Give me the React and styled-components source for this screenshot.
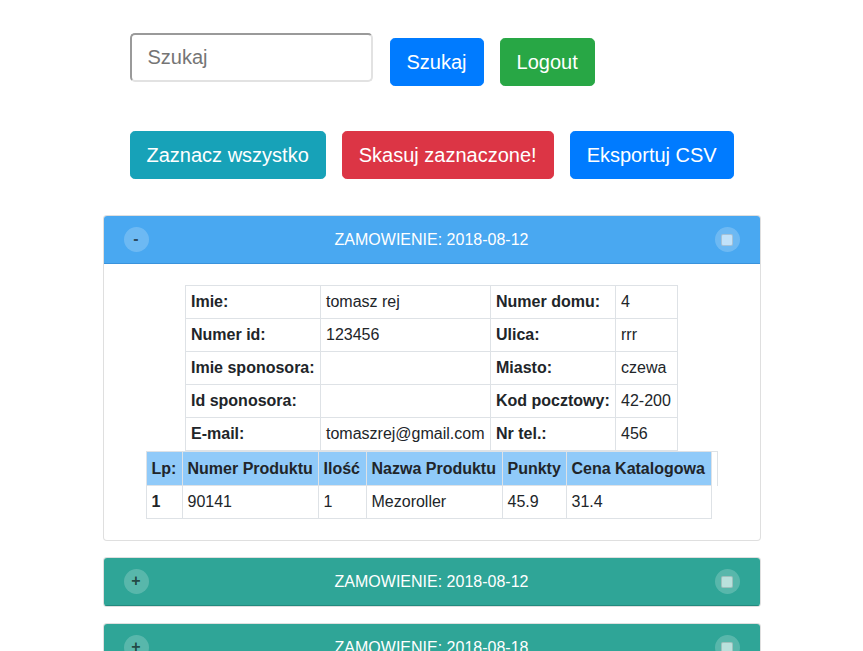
import React from "react";
import styled, { createGlobalStyle } from "styled-components";

const Global = createGlobalStyle`
  html, body { margin: 0; padding: 0; background: #fff; }
  body {
    font-family: "Liberation Sans", Arial, Helvetica, sans-serif;
    color: #212529;
    font-size: 16px;
  }
  * { box-sizing: border-box; }
`;

const Page = styled.div`
  width: 658px;
  margin: 0 auto;
  padding-top: 33px;
`;

const SearchRow = styled.div`
  display: flex;
  align-items: flex-start;
  padding-left: 27px;
`;

const SearchInput = styled.input`
  width: 243px;
  height: 49px;
  margin-right: 17px;
  padding: 0 16px;
  font-family: inherit;
  font-size: 20px;
  color: #495057;
  border-radius: 5px;
  border-style: solid;
  border-width: 2px;
  border-color: #9a9a9a #e2e2e2 #e2e2e2 #9a9a9a;
  outline: none;
  &::placeholder { color: #757575; }
`;

const ButtonGroup = styled.div`
  display: flex;
  gap: 16px;
  margin-top: ${(p) => p.$top || 0}px;
`;

const ActionRow = styled.div`
  display: flex;
  gap: 16px;
  padding-left: 27px;
  margin-top: 45px;
`;

const Button = styled.button`
  font-family: inherit;
  font-size: 20px;
  line-height: 30px;
  padding: 8px 16px;
  color: #fff;
  background: ${(p) => p.$bg};
  border: 1px solid ${(p) => p.$bg};
  border-radius: 4.8px;
  cursor: pointer;
  white-space: nowrap;
`;

const CardList = styled.div`
  display: flex;
  flex-direction: column;
  gap: 16px;
  margin-top: 36px;
`;

const Card = styled.div`
  border: 1px solid rgba(0, 0, 0, 0.125);
  border-radius: 4px;
  overflow: hidden;
  background: #fff;
`;

const CardHeader = styled.div`
  height: 48px;
  display: flex;
  align-items: center;
  justify-content: space-between;
  padding: 0 20px;
  background: ${(p) => p.$bg};
  border-bottom: 1px solid ${(p) => p.$line};
  color: #fff;
`;

const HeaderTitle = styled.div`
  font-size: 16px;
  line-height: 24px;
  flex: 1;
  text-align: center;
`;

const Circle = styled.div`
  width: 25px;
  height: 25px;
  border-radius: 50%;
  background: rgba(255, 255, 255, 0.2);
  display: flex;
  align-items: center;
  justify-content: center;
  flex-shrink: 0;
`;

const ToggleGlyph = styled.span`
  font-size: 16px;
  font-weight: bold;
  line-height: 1;
  color: rgba(0, 0, 0, 0.62);
  margin-top: -1px;
`;

const CheckSquare = styled.span`
  width: 12px;
  height: 12px;
  border-radius: 2px;
  background: rgba(255, 255, 255, 0.58);
  border: 1px solid rgba(0, 0, 0, 0.14);
`;

const CardBody = styled.div`
  padding: 21px 20px;
`;

const InfoTable = styled.table`
  border-collapse: collapse;
  margin: 0 auto;
  table-layout: fixed;
  width: 492px;
`;

const InfoCell = styled.td`
  border: 1px solid #dee2e6;
  padding: 4px 5px;
  line-height: 24px;
  font-size: 16px;
  font-weight: ${(p) => (p.$label ? "bold" : "normal")};
  white-space: nowrap;
  text-align: left;
`;

const ProductTable = styled.table`
  border-collapse: collapse;
  margin: 0 auto;
  table-layout: fixed;
  width: 571px;
`;

const HeadCell = styled.th`
  background: #90caf9;
  border: 1px solid #dee2e6;
  padding: 5px 5px 4px;
  line-height: 24px;
  font-size: 16px;
  font-weight: bold;
  text-align: left;
  white-space: nowrap;
`;

const SpacerCell = styled.th`
  background: #fff;
  border-top: 1px solid #dee2e6;
  border-right: 1px solid #dee2e6;
  border-bottom: none;
  padding: 0;
`;

const BodyCell = styled.td`
  border: 1px solid #dee2e6;
  padding: 4px 5px;
  line-height: 24px;
  font-size: 16px;
  font-weight: ${(p) => (p.$bold ? "bold" : "normal")};
  text-align: left;
  white-space: nowrap;
`;

const info = [
  ["Imie:", "tomasz rej", "Numer domu:", "4"],
  ["Numer id:", "123456", "Ulica:", "rrr"],
  ["Imie sponosora:", "", "Miasto:", "czewa"],
  ["Id sponosora:", "", "Kod pocztowy:", "42-200"],
  ["E-mail:", "tomaszrej@gmail.com", "Nr tel.:", "456"],
];

const infoWidths = [135, 170, 125, 62];

const productCols = [
  ["Lp:", 36],
  ["Numer Produktu", 136],
  ["Ilość", 48],
  ["Nazwa Produktu", 136],
  ["Punkty", 64],
  ["Cena Katalogowa", 145],
];

const products = [["1", "90141", "1", "Mezoroller", "45.9", "31.4"]];

const orders = [
  { date: "2018-08-12", open: true },
  { date: "2018-08-12", open: false },
  { date: "2018-08-18", open: false },
  { date: "2018-08-20", open: false },
];

const BLUE = { bg: "#49a8f1", line: "#3a93dc" };
const TEAL = { bg: "#2fa597", line: "#238a7e" };

function OrderCard({ order }) {
  const theme = order.open ? BLUE : TEAL;
  return (
    <Card>
      <CardHeader $bg={theme.bg} $line={theme.line}>
        <Circle>
          <ToggleGlyph>{order.open ? "-" : "+"}</ToggleGlyph>
        </Circle>
        <HeaderTitle>ZAMOWIENIE: {order.date}</HeaderTitle>
        <Circle>
          <CheckSquare />
        </Circle>
      </CardHeader>
      {order.open && (
        <CardBody>
          <InfoTable>
            <colgroup>
              {infoWidths.map((w, i) => (
                <col key={i} style={{ width: w }} />
              ))}
            </colgroup>
            <tbody>
              {info.map((r, i) => (
                <tr key={i}>
                  <InfoCell $label>{r[0]}</InfoCell>
                  <InfoCell>{r[1]}</InfoCell>
                  <InfoCell $label>{r[2]}</InfoCell>
                  <InfoCell>{r[3]}</InfoCell>
                </tr>
              ))}
            </tbody>
          </InfoTable>
          <ProductTable>
            <colgroup>
              {productCols.map(([n, w]) => (
                <col key={n} style={{ width: w }} />
              ))}
              <col style={{ width: 6 }} />
            </colgroup>
            <thead>
              <tr>
                {productCols.map(([n]) => (
                  <HeadCell key={n}>{n}</HeadCell>
                ))}
                <SpacerCell />
              </tr>
            </thead>
            <tbody>
              {products.map((p, i) => (
                <tr key={i}>
                  {p.map((v, j) => (
                    <BodyCell key={j} $bold={j === 0}>
                      {v}
                    </BodyCell>
                  ))}
                </tr>
              ))}
            </tbody>
          </ProductTable>
        </CardBody>
      )}
    </Card>
  );
}

export default function App() {
  return (
    <>
      <Global />
      <Page>
        <SearchRow>
          <SearchInput placeholder="Szukaj" />
          <ButtonGroup $top={5}>
            <Button $bg="#007bff">Szukaj</Button>
            <Button $bg="#28a745">Logout</Button>
          </ButtonGroup>
        </SearchRow>
        <ActionRow>
          <Button $bg="#17a2b8">Zaznacz wszystko</Button>
          <Button $bg="#dc3545">Skasuj zaznaczone!</Button>
          <Button $bg="#007bff">Eksportuj CSV</Button>
        </ActionRow>
        <CardList>
          {orders.map((o, i) => (
            <OrderCard key={i} order={o} />
          ))}
        </CardList>
      </Page>
    </>
  );
}
